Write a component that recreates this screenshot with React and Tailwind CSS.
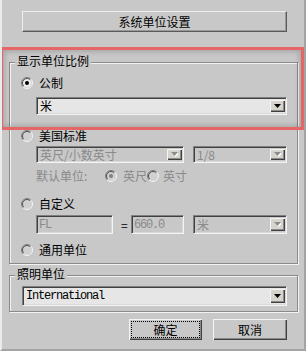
import React from 'react';

const face = 'bg-[#c8c8c8]';

function Radio({ checked, disabled }) {
  return (
    <svg width="12" height="12" viewBox="0 0 12 12" className="shrink-0">
      <circle cx="6" cy="6" r="4.5" fill={disabled ? '#d0d0d0' : '#ececec'} />
      <path d="M2.1 9.9 A5.5 5.5 0 0 1 9.9 2.1" fill="none" stroke="#808080" strokeWidth="1" />
      <path d="M2.8 9.2 A4.5 4.5 0 0 1 9.2 2.8" fill="none" stroke="#505050" strokeWidth="1" />
      <path d="M9.9 2.1 A5.5 5.5 0 0 1 2.1 9.9" fill="none" stroke="#f4f4f4" strokeWidth="1" />
      <path d="M9.2 2.8 A4.5 4.5 0 0 1 2.8 9.2" fill="none" stroke="#d8d8d8" strokeWidth="1" />
      {checked && <circle cx="6" cy="6" r="2" fill={disabled ? '#808080' : '#000'} />}
    </svg>
  );
}

function DropBtn({ disabled }) {
  return (
    <div className="w-[15px] h-full bg-[#d6d4cc] shadow-[inset_1px_1px_0_#f4f4f4,inset_-1px_-1px_0_#404040,inset_-2px_-2px_0_#8a8a8a] flex items-center justify-center shrink-0">
      <svg width="7" height="5" viewBox="0 0 7 5">
        {disabled && <path d="M1 1 H8 L4.5 5 Z" fill="#ffffff" />}
        <path d="M0 0 H7 L3.5 4 Z" fill={disabled ? '#8c8c8c' : '#000'} />
      </svg>
    </div>
  );
}

const mono = "font-['Liberation_Mono',monospace] text-[12px] tracking-[-1.2px]";

function Combo({ text, disabled, className, isMono }) {
  return (
    <div
      className={`flex items-stretch border-t border-l border-[#808080] border-b border-r border-b-[#f4f4f4] border-r-[#f4f4f4] shadow-[inset_1px_1px_0_#404040,inset_-1px_-1px_0_#d8d8d8] p-[2px] pr-[1px] ${disabled ? face : 'bg-[#e6e6e6]'} ${className}`}
    >
      <span
        className={`flex-1 flex items-center pl-[1px] leading-none ${disabled ? 'text-[#8a8a8a]' : 'text-black'} ${isMono ? mono : 'text-[12px]'}`}
      >
        {text}
      </span>
      <DropBtn disabled={disabled} />
    </div>
  );
}

function Field({ text, className }) {
  return (
    <div
      className={`flex items-center border-t border-l border-[#808080] border-b border-r border-b-[#f4f4f4] border-r-[#f4f4f4] shadow-[inset_1px_1px_0_#404040,inset_-1px_-1px_0_#d8d8d8] ${face} pl-[2px] text-[#8a8a8a] leading-none ${mono} ${className}`}
    >
      {text}
    </div>
  );
}

function RadioRow({ label, checked, disabled, className }) {
  return (
    <div className={`flex items-center gap-[6px] pl-[11px] h-[14px] leading-[14px] ${className}`}>
      <Radio checked={checked} disabled={disabled} />
      <span className="text-black">{label}</span>
    </div>
  );
}

function Group({ legend, className, children }) {
  return (
    <div className={`ml-[7px] w-[289px] border border-[#8a8a8a] shadow-[1px_1px_0_#f2f2f2,inset_1px_1px_0_#f2f2f2] ${className}`}>
      <div className={`-mt-[9px] ml-[5px] px-[2px] w-fit leading-[14px] ${face}`}>{legend}</div>
      {children}
    </div>
  );
}

function Button({ label, isDefault, className }) {
  return (
    <div
      className={`h-[21px] flex items-center justify-center ${face} shadow-[inset_1px_1px_0_#f4f4f4,inset_-1px_-1px_0_#404040,inset_-2px_-2px_0_#8a8a8a] ${className}`}
    >
      {isDefault ? (
        <div className="w-[69px] h-[17px] border border-dotted border-black flex items-center justify-center leading-none">{label}</div>
      ) : (
        <span className="leading-none">{label}</span>
      )}
    </div>
  );
}

export default function App() {
  return (
    <div
      className={`relative w-[306px] h-[351px] ${face} border-l-2 border-l-[#ececec] border-r-2 border-r-[#a4a4a4] border-b-2 border-b-[#a4a4a4] text-[12px] text-black font-['Noto_Sans_CJK_SC','Liberation_Sans',sans-serif] flex flex-col overflow-hidden`}
    >
      <div className="mt-[11px] ml-[20px] w-[265px] h-[21px] flex items-center justify-center border-t border-l border-[#eeeeee] border-b border-r border-b-[#5a5a5a] border-r-[#5a5a5a] shadow-[inset_-1px_-1px_0_#9a9a9a]">
        系统单位设置
      </div>

      <Group legend="显示单位比例" className="mt-[30px]">
        <RadioRow label="公制" checked className="mt-[8px]" />
        <Combo text="米" className="mt-[7px] ml-[26px] w-[251px] h-[18px]" />
        <RadioRow label="美国标准" disabled className="mt-[14px]" />
        <div className="mt-[3px] ml-[26px] flex gap-[9px]">
          <Combo text="英尺/小数英寸" disabled className="w-[148px] h-[17px]" />
          <Combo text="1/8" disabled className="w-[94px] h-[17px]" />
        </div>
        <div className="mt-[6px] ml-[26px] flex items-center h-[14px] leading-[14px] text-[#8a8a8a]">
          <span className="w-[69px]">默认单位:</span>
          <Radio checked disabled />
          <span className="ml-[6px] w-[24px]">英尺</span>
          <Radio disabled />
          <span className="ml-[4px]">英寸</span>
        </div>
        <RadioRow label="自定义" disabled className="mt-[14px]" />
        <div className="mt-[4px] ml-[26px] flex items-center h-[19px]">
          <Field text="FL" className="w-[77px] h-[19px]" />
          <span className="ml-[8px] w-[10px] text-black leading-none">=</span>
          <Field text="660.0" className="w-[53px] h-[19px]" />
          <Combo text="米" disabled className="ml-[9px] w-[94px] h-[19px]" />
        </div>
        <RadioRow label="通用单位" disabled className="mt-[9px] mb-[6px]" />
      </Group>

      <Group legend="照明单位" className="mt-[11px]">
        <Combo text="International" isMono className="mt-[5px] ml-[12px] w-[265px] h-[20px] mb-[5px]" />
      </Group>

      <div className="mt-[7px] ml-[127px] flex gap-[11px]">
        <Button label="确定" isDefault className="w-[73px]" />
        <Button label="取消" className="w-[74px]" />
      </div>

      <div className="pointer-events-none absolute left-[-2px] top-[47px] w-[304px] h-[83px] border-[3px] border-[#e46666] shadow-[inset_0_0_5px_2px_rgba(0,0,0,0.16)]" />
    </div>
  );
}
